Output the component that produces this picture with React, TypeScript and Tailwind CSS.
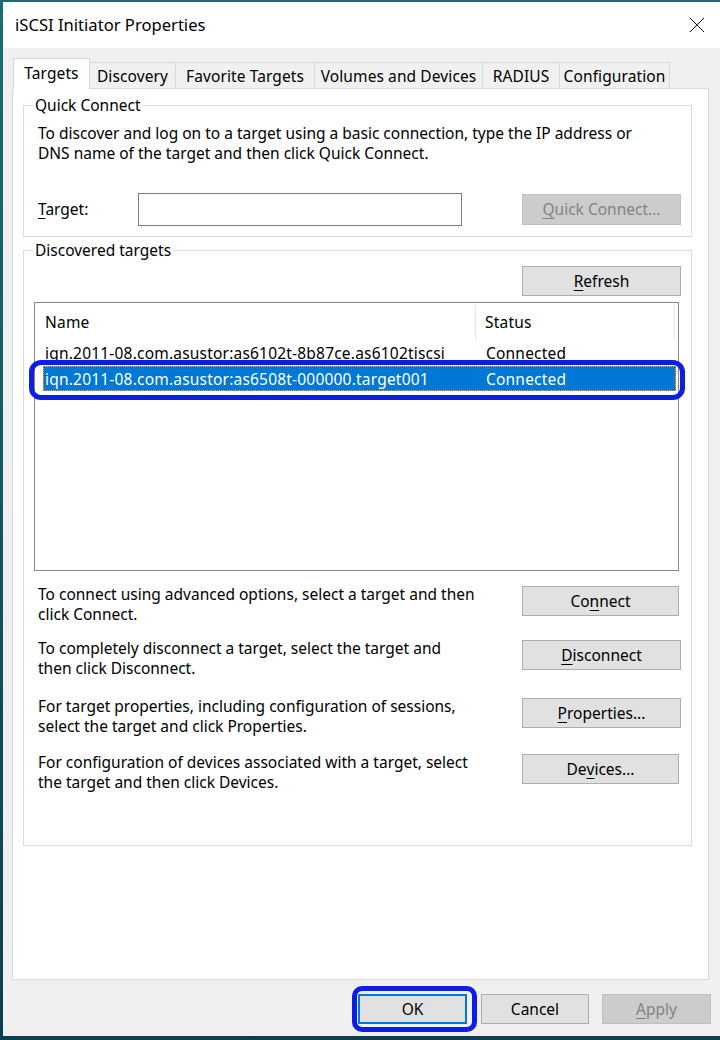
import React from 'react';

type BtnProps = {
  children: React.ReactNode;
  disabled?: boolean;
  className?: string;
};

function WinButton({ children, disabled, className = '' }: BtnProps) {
  return (
    <button
      type="button"
      disabled={disabled}
      className={`flex items-center justify-center h-[30px] pt-[1px] border text-[15.5px] leading-none ${
        disabled
          ? 'bg-[#cccccc] border-[#bfbfbf] text-[#838383]'
          : 'bg-[#e1e1e1] border-[#adadad] text-black'
      } ${className}`}
    >
      {children}
    </button>
  );
}

// underlined access key letter
const Key: React.FC<{ children: React.ReactNode }> = ({ children }) => (
  <span className="underline underline-offset-[3px] decoration-1">{children}</span>
);

const tabs = [
  { label: 'Discovery', w: 'w-[86px]' },
  { label: 'Favorite Targets', w: 'w-[139px]' },
  { label: 'Volumes and Devices', w: 'w-[168px]' },
  { label: 'RADIUS', w: 'w-[77px]' },
  { label: 'Configuration', w: 'w-[110px]' },
];

const actions = [
  {
    lines: ['To connect using advanced options, select a target and then', 'click Connect.'],
    button: (
      <>
        Co<Key>n</Key>nect
      </>
    ),
    w: 'w-[157px]',
    mt: 'mt-[13px]',
  },
  {
    lines: ['To completely disconnect a target, select the target and', 'then click Disconnect.'],
    button: (
      <>
        <Key>D</Key>isconnect
      </>
    ),
    w: 'w-[159px]',
    mt: 'mt-[14px]',
  },
  {
    lines: ['For target properties, including configuration of sessions,', 'select the target and click Properties.'],
    button: (
      <>
        <Key>P</Key>roperties...
      </>
    ),
    w: 'w-[159px]',
    mt: 'mt-[18px]',
  },
  {
    lines: ['For configuration of devices associated with a target, select', 'the target and then click Devices.'],
    button: (
      <>
        De<Key>v</Key>ices...
      </>
    ),
    w: 'w-[157px]',
    mt: 'mt-[16px]',
  },
];

const App: React.FC = () => {
  return (
    <div className="w-[720px] h-[1040px] overflow-hidden bg-[linear-gradient(to_bottom,#1a6d74,#0b3f4f)] pl-[3px] pt-[2px] font-['Noto_Sans',sans-serif] text-black">
      <div className="w-[717px] h-[1034px] bg-[#f0f0f0] flex flex-col">
        {/* title bar */}
        <div className="h-[46px] bg-white flex items-center justify-between pl-[12px] pr-[15px]">
          <span className="text-[16.6px]">iSCSI Initiator Properties</span>
          <svg width="16" height="16" viewBox="0 0 16 16">
            <path d="M1 1 L15 15 M15 1 L1 15" stroke="#111" strokeWidth="1" fill="none" />
          </svg>
        </div>

        {/* tabs */}
        <div className="pt-[10px] pl-[10px] flex items-end h-[40px] text-[15.5px] tracking-[0.1px]">
          <div className="relative z-10 w-[77px] h-[31px] -mb-px bg-white border border-b-0 border-[#d9d9d9] flex items-center justify-center">
            Targets
          </div>
          {tabs.map((t) => (
            <div
              key={t.label}
              className={`${t.w} h-[26px] border border-b-0 border-l-0 border-[#d9d9d9] bg-[#f0f0f0] flex items-center justify-center pt-[3px]`}
            >
              {t.label}
            </div>
          ))}
        </div>

        {/* tab panel */}
        <div className="ml-[9px] w-[697px] h-[892px] border border-[#d9d9d9] bg-white pt-[6px] text-[15.5px]">
          <fieldset className="ml-[10px] w-[669px] border border-[#dcdcdc]">
            <legend className="ml-[9px] px-[2px] leading-[20px]">Quick Connect</legend>
            <div className="pl-[14px] pr-[10px] pt-[8px] pb-[10px]">
              <p className="leading-[20px]">
                To discover and log on to a target using a basic connection, type the IP address or
                <br />
                DNS name of the target and then click Quick Connect.
              </p>
              <div className="mt-[30px] flex items-center">
                <span className="w-[100px] pt-[1px]">
                  <Key>T</Key>arget:
                </span>
                <div className="w-[324px] h-[33px] border border-[#7a7a7a] bg-white" />
                <WinButton disabled className="ml-[60px] w-[159px] h-[31px]">
                  <Key>Q</Key>uick Connect...
                </WinButton>
              </div>
            </div>
          </fieldset>

          <fieldset className="mt-[3px] ml-[10px] w-[669px] border border-[#dcdcdc]">
            <legend className="ml-[9px] px-[2px] leading-[20px]">Discovered targets</legend>
            <div className="pl-[10px] pr-[10px] pt-[6px] pb-[53px] flex flex-col">
              <WinButton className="self-end w-[159px]">
                <Key>R</Key>efresh
              </WinButton>

              {/* list view */}
              <div className="mt-[6px] w-[645px] h-[269px] border border-[#828790] bg-white tracking-[0.2px]">
                <div className="flex h-[38px] items-center">
                  <div className="w-[441px] h-[35px] flex items-center pl-[10px] pt-[1px] border-r border-[#e5e5e5]">
                    Name
                  </div>
                  <div className="w-[199px] h-[35px] flex items-center pl-[9px] pt-[1px] border-r border-[#e5e5e5]">
                    Status
                  </div>
                </div>
                <div className="ml-[8px] flex h-[25px] items-center pt-[1px]">
                  <div className="w-[433px] pl-[2px]">iqn.2011-08.com.asustor:as6102t-8b87ce.as6102tiscsi</div>
                  <div className="pl-[10px]">Connected</div>
                </div>
                <div className="relative ml-[8px] w-[633px] flex h-[25px] items-center pt-[2px] bg-[#0078d7] text-white outline outline-1 outline-dotted outline-[#f0a868] -outline-offset-1">
                  <div className="w-[433px] pl-[2px]">iqn.2011-08.com.asustor:as6508t-000000.target001</div>
                  <div className="pl-[10px]">Connected</div>
                  <div className="absolute -left-[14px] -right-[9px] -top-[6px] -bottom-[9px] border-[5px] border-[#0a1ee8] rounded-[12px]" />
                </div>
              </div>

              {actions.map((a, i) => (
                <div key={i} className={`${a.mt} flex items-start`}>
                  <p className="w-[488px] pl-[4px] leading-[20px]">
                    {a.lines[0]}
                    <br />
                    {a.lines[1]}
                  </p>
                  <WinButton className={`mt-[2px] ${a.w}`}>{a.button}</WinButton>
                </div>
              ))}
            </div>
          </fieldset>
        </div>

        {/* dialog buttons */}
        <div className="mt-[14px] flex justify-end gap-[13px] pr-[9px]">
          <div className="relative">
            <button
              type="button"
              className="w-[109px] h-[30px] pt-[1px] flex items-center justify-center bg-[#e1e1e1] border-2 border-[#0078d7] text-[15.5px]"
            >
              OK
            </button>
            <div className="absolute -left-[6px] -right-[10px] -top-[8px] -bottom-[8px] border-[5px] border-[#0a1ee8] rounded-[10px]" />
          </div>
          <WinButton className="w-[108px] ml-[1px]">Cancel</WinButton>
          <WinButton disabled className="w-[109px]">
            <Key>A</Key>pply
          </WinButton>
        </div>
      </div>
    </div>
  );
};

export default App;
